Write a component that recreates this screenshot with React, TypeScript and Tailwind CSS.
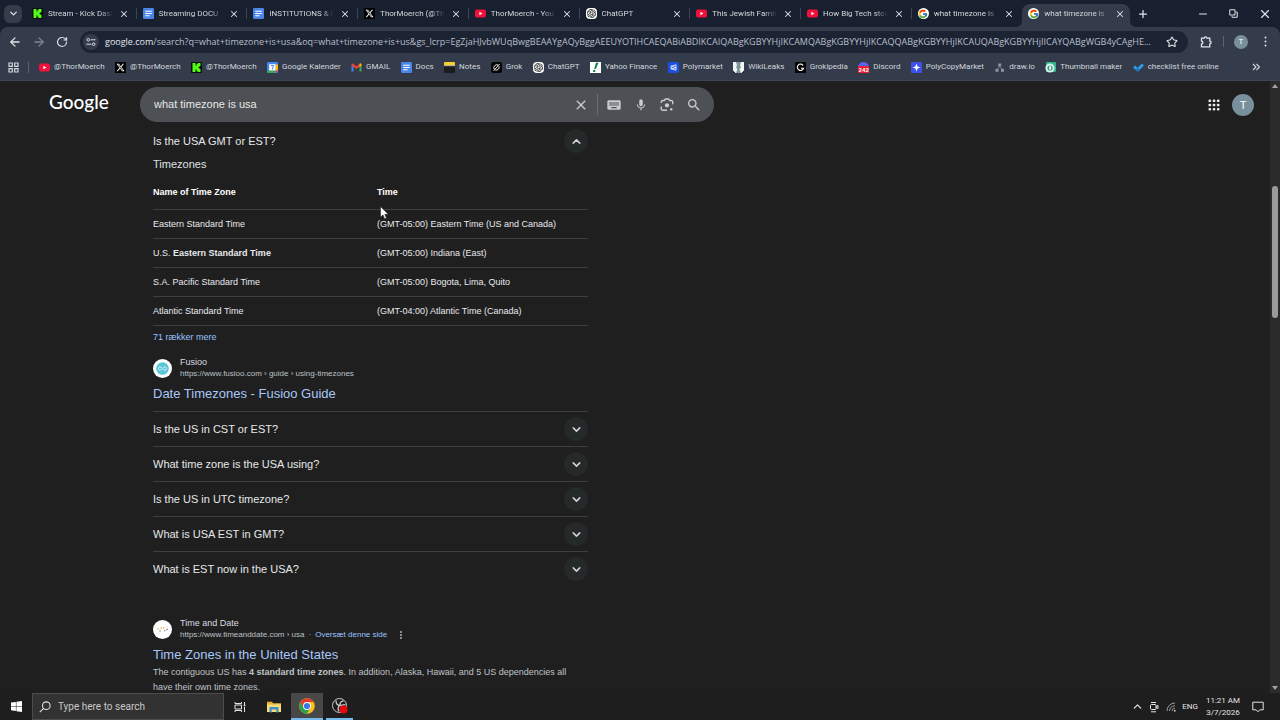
import type { ReactNode } from 'react';
import { FaXTwitter } from 'react-icons/fa6';
import { FcGoogle } from 'react-icons/fc';
import { MdClose, MdKeyboard, MdMic, MdSearch } from 'react-icons/md';
import { SiOpenai } from 'react-icons/si';
import { ArrowLeft, ArrowRight, ChevronDown, ChevronUp, Copy, Minus, Plus, RotateCw, Star, X } from 'lucide-react';

/* ---------- favicons ---------- */

function KickIcon() {
  return (
    <svg viewBox="0 0 11 11" className="size-[11px] shrink-0">
      <rect width="11" height="11" rx="1" fill="#0b0e0f" />
      <path d="M1.5 1h3v2.5h1V2h1V1h3v3h-1v1h-1v1h1v1h1v3h-3V9h-1V7.5h-1V10h-3z" fill="#53fc18" />
    </svg>
  );
}

function DocsIcon() {
  return (
    <svg viewBox="0 0 11 11" className="size-[11px] shrink-0">
      <rect width="11" height="11" rx="1.2" fill="#4a86e8" />
      <path d="M2.2 3.2h6.6M2.2 5.5h6.6M2.2 7.8h4.4" stroke="#fff" strokeWidth="1.1" />
    </svg>
  );
}

function XIcon() {
  return (
    <span className="flex size-[11px] shrink-0 items-center justify-center bg-black text-white">
      <FaXTwitter size={9} />
    </span>
  );
}

function YouTubeIcon() {
  return (
    <svg viewBox="0 0 11 11" className="size-[11px] shrink-0">
      <rect y="1.5" width="11" height="8" rx="2" fill="#f0103a" />
      <path d="M4.4 3.8v3.4l3-1.7z" fill="#fff" />
    </svg>
  );
}

function ChatGptIcon() {
  return (
    <span className="flex size-[11px] shrink-0 items-center justify-center rounded-sm bg-white text-black">
      <SiOpenai size={9} />
    </span>
  );
}

function GoogleIcon() {
  return (
    <span className="flex size-[11px] shrink-0 items-center justify-center rounded-full bg-white">
      <FcGoogle size={10} />
    </span>
  );
}

function CalendarIcon() {
  return (
    <svg viewBox="0 0 11 11" className="size-[11px] shrink-0">
      <rect width="11" height="11" rx="1.2" fill="#4285f4" />
      <path d="M8.5 2.5H11v6H8.5z" fill="#fbbc04" />
      <path d="M0 8.5h8.5V11H1.2A1.2 1.2 0 0 1 0 9.8z" fill="#34a853" />
      <path d="M8.5 8.5H11L8.5 11z" fill="#ea4335" />
      <rect x="2.2" y="2.2" width="6.3" height="6.3" fill="#fff" />
      <path d="M4 3.5h2.6L5.2 7.4" fill="none" stroke="#4285f4" strokeWidth="1" />
    </svg>
  );
}

function GmailIcon() {
  return (
    <svg viewBox="0 0 11 11" className="size-[11px] shrink-0">
      <path d="M.5 3v6.5h2V4.6z" fill="#4285f4" />
      <path d="M10.5 3v6.5h-2V4.6z" fill="#34a853" />
      <path d="M.5 2.8c0-1.2 1.2-1.5 2-.9l3 2.3 3-2.3c.8-.6 2-.3 2 .9v.6l-5 3.7-5-3.7z" fill="#ea4335" />
      <path d="M8.5 1.9c.8-.6 2-.3 2 .9v.6l-2 1.5z" fill="#fbbc04" />
    </svg>
  );
}

function NotesIcon() {
  return (
    <svg viewBox="0 0 11 11" className="size-[11px] shrink-0">
      <rect width="11" height="11" rx="1" fill="#1c1c1a" />
      <path d="M0 1a1 1 0 0 1 1-1h9a1 1 0 0 1 1 1v2.2H0z" fill="#f7d02c" />
      <path d="M0 3.7h11" stroke="#fff" strokeWidth=".7" />
    </svg>
  );
}

function GrokIcon() {
  return (
    <svg viewBox="0 0 11 11" className="size-[11px] shrink-0">
      <rect width="11" height="11" rx="2.5" fill="#050505" />
      <path d="M7 3a3 3 0 0 0-3.8 4.2M4.2 8A3 3 0 0 0 8 4.2M2.6 8.8 8.6 2" fill="none" stroke="#fff" strokeWidth=".9" />
    </svg>
  );
}

function YahooFinanceIcon() {
  return (
    <svg viewBox="0 0 11 11" className="size-[11px] shrink-0">
      <rect width="11" height="11" fill="#fff" />
      <path d="M6 .8h2.6L5.8 7H4.2z" fill="#12804a" />
      <circle cx="4.2" cy="8.9" r="1.2" fill="#12804a" />
    </svg>
  );
}

function PolymarketIcon() {
  return (
    <svg viewBox="0 0 11 11" className="size-[11px] shrink-0">
      <rect width="11" height="11" rx="1.5" fill="#1d4fe0" />
      <path d="M8 2.8v5.4L3 6.8V4.2zM3 4.2l5 1.5-5 1.1" fill="none" stroke="#fff" strokeWidth=".8" />
    </svg>
  );
}

function WikiLeaksIcon() {
  return (
    <svg viewBox="0 0 11 11" className="size-[11px] shrink-0">
      <rect width="11" height="11" fill="#f3f5f5" />
      <path d="M3 0h5L7 3.5 8 5 6.5 7.5 8 11H3l1.4-3.6L3 5l1-1.5z" fill="#7c9598" />
      <path d="M0 8.5 2.5 11H0zM11 8.5 8.5 11H11z" fill="#222" />
    </svg>
  );
}

function GrokipediaIcon() {
  return (
    <svg viewBox="0 0 11 11" className="size-[11px] shrink-0">
      <rect width="11" height="11" fill="#060606" />
      <path d="M8.2 3.5A3.2 3.2 0 1 0 8.6 6.2H6" fill="none" stroke="#fff" strokeWidth="1.1" />
    </svg>
  );
}

function DiscordIcon() {
  return (
    <span className="flex size-[11px] shrink-0 flex-col justify-end rounded-t-full bg-[#5865f2]">
      <span className="bg-[#ed1c2e] text-center text-[6px] leading-[7px] font-bold text-white">242</span>
    </span>
  );
}

function PolyCopyIcon() {
  return (
    <svg viewBox="0 0 11 11" className="size-[11px] shrink-0">
      <rect width="11" height="11" rx="1" fill="#3c50ea" />
      <path d="M5.5 1.5 6.6 4.4 9.5 5.5 6.6 6.6 5.5 9.5 4.4 6.6 1.5 5.5l2.9-1.1z" fill="#fff" />
    </svg>
  );
}

function DrawIoIcon() {
  return (
    <svg viewBox="0 0 11 11" className="size-[11px] shrink-0" fill="#8c929c">
      <rect x="4.2" y="1.5" width="3" height="3" />
      <rect x="1.5" y="6.8" width="3" height="3" />
      <rect x="7" y="6.8" width="3" height="3" />
      <path d="M5.7 4 3 8M5.7 4l2.8 4" stroke="#8c929c" strokeWidth=".7" />
    </svg>
  );
}

function ThumbnailIcon() {
  return (
    <svg viewBox="0 0 11 11" className="size-[11px] shrink-0">
      <rect x="1" width="10" height="10" rx="1" fill="#35b38d" />
      <circle cx="5" cy="6" r="4.6" fill="#d7f5ea" />
      <circle cx="5" cy="6" r="2.6" fill="#2a9c7a" />
      <path d="M4.2 4.3h1.9v3.4H4.2z" fill="#fff" />
    </svg>
  );
}

function ChecklistIcon() {
  return (
    <svg viewBox="0 0 11 11" className="size-[11px] shrink-0">
      <path d="M0 5.6 2.2 3.4 4.6 5.8 8.8 1.4 11 3.4 4.8 9.8z" fill="#2f9be6" />
      <path d="M2.8 7.8 4.6 5.8 6.6 7.8 4.8 9.8z" fill="#1c74bd" />
    </svg>
  );
}

/* ---------- data ---------- */

const tabs: { title: string; icon: ReactNode; active?: boolean }[] = [
  { title: 'Stream - Kick Dash', icon: <KickIcon /> },
  { title: 'Streaming DOCU', icon: <DocsIcon /> },
  { title: 'INSTITUTIONS & C', icon: <DocsIcon /> },
  { title: 'ThorMoerch (@Th', icon: <XIcon /> },
  { title: 'ThorMoerch - You', icon: <YouTubeIcon /> },
  { title: 'ChatGPT', icon: <ChatGptIcon /> },
  { title: 'This Jewish Family', icon: <YouTubeIcon /> },
  { title: 'How Big Tech stole', icon: <YouTubeIcon /> },
  { title: 'what timezone is', icon: <GoogleIcon /> },
  { title: 'what timezone is', icon: <GoogleIcon />, active: true },
];

const bookmarks: { label: string; icon: ReactNode }[] = [
  { label: '@ThorMoerch', icon: <YouTubeIcon /> },
  { label: '@ThorMoerch', icon: <XIcon /> },
  { label: '@ThorMoerch', icon: <KickIcon /> },
  { label: 'Google Kalender', icon: <CalendarIcon /> },
  { label: 'GMAIL', icon: <GmailIcon /> },
  { label: 'Docs', icon: <DocsIcon /> },
  { label: 'Notes', icon: <NotesIcon /> },
  { label: 'Grok', icon: <GrokIcon /> },
  { label: 'ChatGPT', icon: <ChatGptIcon /> },
  { label: 'Yahoo Finance', icon: <YahooFinanceIcon /> },
  { label: 'Polymarket', icon: <PolymarketIcon /> },
  { label: 'WikiLeaks', icon: <WikiLeaksIcon /> },
  { label: 'Grokipedia', icon: <GrokipediaIcon /> },
  { label: 'Discord', icon: <DiscordIcon /> },
  { label: 'PolyCopyMarket', icon: <PolyCopyIcon /> },
  { label: 'draw.io', icon: <DrawIoIcon /> },
  { label: 'Thumbnail maker', icon: <ThumbnailIcon /> },
  { label: 'checklist free online', icon: <ChecklistIcon /> },
];

const zones: { name: ReactNode; time: string }[] = [
  { name: 'Eastern Standard Time', time: '(GMT-05:00) Eastern Time (US and Canada)' },
  { name: <>U.S. <b>Eastern Standard Time</b></>, time: '(GMT-05:00) Indiana (East)' },
  { name: 'S.A. Pacific Standard Time', time: '(GMT-05:00) Bogota, Lima, Quito' },
  { name: 'Atlantic Standard Time', time: '(GMT-04:00) Atlantic Time (Canada)' },
];

const questions = [
  'Is the US in CST or EST?',
  'What time zone is the USA using?',
  'Is the US in UTC timezone?',
  'What is USA EST in GMT?',
  'What is EST now in the USA?',
];

const urlQuery =
  '/search?q=what+timezone+is+usa&oq=what+timezone+is+us&gs_lcrp=EgZjaHJvbWUqBwgBEAAYgAQyBggAEEUYOTIHCAEQABiABDIKCAIQABgKGBYYHjIKCAMQABgKGBYYHjIKCAQQABgKGBYYHjIKCAUQABgKGBYYHjIICAYQABgWGB4yCAgHEAAYFhgeMgg';

/* ---------- browser chrome ---------- */

function TabStrip() {
  return (
    <div className="flex h-[27px] items-center pl-1">
      <button aria-label="Search tabs" className="flex size-[18px] items-center justify-center rounded-md bg-[#353c4a]">
        <ChevronDown size={11} strokeWidth={3} />
      </button>
      <div className="ml-1 flex h-full min-w-0 flex-1 items-end">
        {tabs.map((tab, i) => (
          <div key={i} className="flex h-[23px] min-w-0 flex-1">
            <div
              className={
                tab.active
                  ? 'relative flex min-w-0 flex-1 items-center rounded-t-lg bg-[#343b4a] pr-[5px] pb-1 pl-1.5'
                  : 'flex min-w-0 flex-1 items-center pr-[5px] pb-1 pl-1.5'
              }
            >
              {tab.active && (
                <svg viewBox="0 0 6 6" className="absolute bottom-0 -left-1.5 size-1.5" fill="#343b4a">
                  <path d="M6 0v6H0a6 6 0 0 0 6-6z" />
                </svg>
              )}
              {tab.active && (
                <svg viewBox="0 0 6 6" className="absolute -right-1.5 bottom-0 size-1.5" fill="#343b4a">
                  <path d="M0 0v6h6a6 6 0 0 1-6-6z" />
                </svg>
              )}
              {tab.icon}
              <span className="mr-1.5 ml-[5px] min-w-0 flex-1 overflow-hidden mask-r-from-80% text-[8px] whitespace-nowrap text-[#d3d7de]">
                {tab.title}
              </span>
              <button aria-label="Close tab" className="shrink-0">
                <X size={10} strokeWidth={2.5} />
              </button>
            </div>
            <span className={i < 8 ? 'mt-1 ml-0.5 h-[11px] w-px bg-[#3b4456]' : 'ml-0.5 w-px'} />
          </div>
        ))}
      </div>
      <button aria-label="New tab" className="ml-1">
        <Plus size={12} strokeWidth={2.5} />
      </button>
      <div className="ml-12 flex w-[83px] shrink-0 items-center justify-between pr-2">
        <button aria-label="Minimize"><Minus size={12} /></button>
        <button aria-label="Restore"><Copy size={9} strokeWidth={2.8} className="-scale-x-100 rotate-90" /></button>
        <button aria-label="Close"><X size={14} strokeWidth={2} /></button>
      </div>
    </div>
  );
}

function Toolbar() {
  return (
    <div className="flex h-[29px] items-center rounded-t-lg bg-[#343b4a] pr-2.5 pl-2">
      <button aria-label="Back"><ArrowLeft size={14} strokeWidth={2.2} /></button>
      <button aria-label="Forward" className="ml-2.5 text-[#7d8492]"><ArrowRight size={14} strokeWidth={2.2} /></button>
      <button aria-label="Reload" className="ml-2.5"><RotateCw size={12} strokeWidth={2.4} /></button>
      <div className="ml-3 flex h-[22px] min-w-0 flex-1 items-center rounded-full bg-[#1c2434] pr-2.5 pl-[3px]">
        <button aria-label="Site information" className="flex size-4 shrink-0 items-center justify-center rounded-full bg-[#343b4a]">
          <svg viewBox="0 0 10 10" className="size-[10px]" fill="none" stroke="#d8dce3" strokeWidth="1">
            <circle cx="2.3" cy="2.8" r="1.3" />
            <path d="M4.6 2.8h5M.4 7.2h5" />
            <circle cx="7.7" cy="7.2" r="1.3" />
          </svg>
        </button>
        <span className="mr-2.5 ml-1.5 min-w-0 flex-1 truncate font-['Open_Sans',sans-serif] text-[9px] text-[#b9bfca]">
          <span className="text-[#e6e9ee]">google.com</span>
          {urlQuery}
        </span>
        <button aria-label="Bookmark this page"><Star size={12} strokeWidth={2.2} /></button>
      </div>
      <button aria-label="Extensions" className="ml-3">
        <svg viewBox="0 0 12 12" className="size-3" fill="none" stroke="currentColor" strokeWidth="1.3">
          <path d="M1.5 2.2h2.7a1.3 1.3 0 0 1 2.6 0h3v3a1.3 1.3 0 0 1 0 2.6v3H1.5V8a1.4 1.4 0 0 0 0-2.8z" />
        </svg>
      </button>
      <span className="ml-[11px] h-[11px] w-px bg-[#596172]" />
      <button className="ml-2.5 size-[14px] rounded-full bg-[#78909c] text-[8px] leading-[14px] text-white">T</button>
      <button aria-label="Menu" className="ml-3 flex w-2.5 justify-center">
        <svg viewBox="0 0 3 11" className="h-[11px] w-[3px]" fill="currentColor">
          <circle cx="1.5" cy="1.5" r="1" /><circle cx="1.5" cy="5.5" r="1" /><circle cx="1.5" cy="9.5" r="1" />
        </svg>
      </button>
    </div>
  );
}

function BookmarksBar() {
  return (
    <div className="flex h-[25px] items-center border-b border-[#3e4554] bg-[#343b4a] pr-5 pb-0.5 pl-2 text-[8px] text-[#d2d6dd]">
      <svg viewBox="0 0 11 11" className="size-[11px]" fill="none" stroke="currentColor" strokeWidth="1.2">
        <path d="M1 1h3.3v3.3H1zM6.7 1H10v3.3H6.7zM1 6.7h3.3V10H1zM6.7 6.7H10V10H6.7z" />
      </svg>
      <span className="mr-2.5 ml-[9px] h-[11px] w-px bg-[#596172]" />
      <nav className="mr-[33px] flex min-w-0 flex-1 justify-between">
        {bookmarks.map((b, i) => (
          <a key={i} href="#" className="flex items-center gap-1 whitespace-nowrap">
            {b.icon}
            {b.label}
          </a>
        ))}
      </nav>
      <button aria-label="More bookmarks">
        <svg viewBox="0 0 8 8" className="size-2" fill="none" stroke="currentColor" strokeWidth="1.1">
          <path d="m1 1 3 3-3 3M4.5 1l3 3-3 3" />
        </svg>
      </button>
    </div>
  );
}

/* ---------- search page ---------- */

function SearchHeader() {
  return (
    <header className="flex items-center pt-1.5 pr-4 pl-[49px]">
      <a href="#" className="w-[91px] pb-1.5 font-[Lato,sans-serif] text-[19px] leading-6 font-medium text-white">Google</a>
      <form className="flex h-[35px] w-[574px] items-center rounded-full bg-[#4d5055] pr-3 pl-3.5 text-[#c9ccd0]">
        <input
          aria-label="Search"
          defaultValue="what timezone is usa"
          className="min-w-0 flex-1 text-[11px] text-[#e8e8e8] outline-none"
        />
        <button type="button" aria-label="Clear"><MdClose size={16} /></button>
        <span className="mx-2 h-[21px] w-px bg-[#6b6f75]" />
        <button type="button" aria-label="Keyboard"><MdKeyboard size={16} /></button>
        <button type="button" aria-label="Voice search" className="ml-3"><MdMic size={14} /></button>
        <button type="button" aria-label="Search by image" className="ml-3">
          <svg viewBox="0 0 14 14" className="size-[14px]" fill="none" stroke="currentColor" strokeWidth="1.4">
            <path d="M1.2 5V4.2a1.7 1.7 0 0 1 1.7-1.7h1.5L5.3 1h3.4l.9 1.5h1.5a1.7 1.7 0 0 1 1.7 1.7v2M1.2 8.5v2a1.7 1.7 0 0 0 1.7 1.7H7" />
            <circle cx="7" cy="7.3" r="2.1" fill="currentColor" stroke="none" />
            <circle cx="11.3" cy="11.3" r="1.2" fill="currentColor" stroke="none" />
          </svg>
        </button>
        <button type="submit" aria-label="Google search" className="ml-3"><MdSearch size={16} /></button>
      </form>
      <div className="ml-auto flex items-center gap-3">
        <button aria-label="Google apps">
          <svg viewBox="0 0 12 12" className="size-3" fill="#e8eaed">
            {[0.5, 4.7, 8.9].map((y) =>
              [0.5, 4.7, 8.9].map((x) => <rect key={`${x}-${y}`} x={x} y={y} width="2.6" height="2.6" rx=".9" />),
            )}
          </svg>
        </button>
        <button className="size-[22px] rounded-full bg-[#78909c] text-[11px] leading-[22px] text-white">T</button>
      </div>
    </header>
  );
}

function Question({ text, open }: { text: string; open?: boolean }) {
  return (
    <div className="flex items-center justify-between">
      <span className="text-[11px] text-[#e6e8ea]">{text}</span>
      <button aria-label={text} className="flex size-6 items-center justify-center rounded-full bg-[#262929] text-[#d0d2d5]">
        {open ? <ChevronUp size={13} strokeWidth={2.8} /> : <ChevronDown size={13} strokeWidth={2.8} />}
      </button>
    </div>
  );
}

interface SourceProps {
  icon: ReactNode;
  site: string;
  url: ReactNode;
}

function Source({ icon, site, url }: SourceProps) {
  return (
    <div className="flex items-center gap-2">
      {icon}
      <div>
        <div className="text-[9px] leading-3 text-[#dadce0]">{site}</div>
        <div className="flex items-center text-[8px] leading-3 text-[#bdc1c6]">{url}</div>
      </div>
    </div>
  );
}

function Results() {
  return (
    <main className="ml-[153px] w-[435px] pt-[7px]">
      <Question text="Is the USA GMT or EST?" open />
      <div className="mt-[3px] text-[11px] leading-4 text-[#dfe1e4]">Timezones</div>
      <table className="mt-1 w-full text-left text-[9px] leading-3 text-[#e8eaed]">
        <thead>
          <tr className="border-b border-[#3c4043]">
            <th className="w-[224px] pt-2.5 pb-[11px] text-white">Name of Time Zone</th>
            <th className="pt-2.5 pb-[11px] text-white">Time</th>
          </tr>
        </thead>
        <tbody>
          {zones.map((z) => (
            <tr key={z.time} className="border-b border-[#3c4043]">
              <td className="py-2">{z.name}</td>
              <td className="py-2">{z.time}</td>
            </tr>
          ))}
        </tbody>
      </table>
      <a href="#" className="mt-[3px] block text-[9px] leading-4 text-[#99c3ff]">71 rækker mere</a>
      <div className="mt-[11px]">
        <Source
          icon={
            <svg viewBox="0 0 19 19" className="size-[19px]">
              <circle cx="9.5" cy="9.5" r="9.5" fill="#fff" />
              <circle cx="9.5" cy="9.5" r="6.3" fill="#5bc5d9" />
              <path d="M9.5 9.5C8 7.5 5.5 7.5 5.5 9.5S8 11.5 9.5 9.5s4-2 4 0-2.500 2-4 0z" fill="none" stroke="#e4f8fb" strokeWidth="1" />
            </svg>
          }
          site="Fusioo"
          url="https://www.fusioo.com › guide › using-timezones"
        />
      </div>
      <a href="#" className="mt-1 mb-[7px] block text-[13px] leading-5 text-[#a8c7fa]">Date Timezones - Fusioo Guide</a>
      {questions.map((q) => (
        <div key={q} className="border-t border-[#3c4043] py-[5px]">
          <Question text={q} />
        </div>
      ))}
      <div className="mt-[31px]">
        <Source
          icon={
            <svg viewBox="0 0 19 19" className="size-[19px]">
              <circle cx="9.5" cy="9.5" r="9.5" fill="#fff" />
              <circle cx="5" cy="9" r=".8" fill="#f2a33c" />
              <circle cx="7" cy="11" r=".8" fill="#5aa469" />
              <circle cx="8.3" cy="8" r=".8" fill="#e8b23a" />
              <circle cx="10.5" cy="8" r=".8" fill="#e8b23a" />
              <circle cx="11.8" cy="10.8" r=".8" fill="#5aa0d8" />
              <circle cx="14" cy="9.5" r=".8" fill="#d9534f" />
            </svg>
          }
          site="Time and Date"
          url={
            <>
              https://www.timeanddate.com › usa
              <span className="mx-1">·</span>
              <a href="#" className="text-[#99c3ff]">Oversæt denne side</a>
              <button aria-label="About this result" className="ml-[13px]">
                <svg viewBox="0 0 2 8" className="h-2 w-0.5" fill="currentColor">
                  <circle cx="1" cy="1" r=".9" /><circle cx="1" cy="4" r=".9" /><circle cx="1" cy="7" r=".9" />
                </svg>
              </button>
            </>
          }
        />
      </div>
      <a href="#" className="mt-1 block text-[13px] leading-5 text-[#a8c7fa]">Time Zones in the United States</a>
      <p className="text-[9px] leading-[15px] text-[#bfc3c8]">
        The contiguous US has <b>4 standard time zones</b>. In addition, Alaska, Hawaii, and 5 US dependencies all
        have their own time zones.
      </p>
    </main>
  );
}

function Scrollbar() {
  return (
    <div className="flex w-2.5 shrink-0 flex-col items-center bg-[#2b2b2b] py-[3px]">
      <svg viewBox="0 0 6 4" className="h-1 w-1.5" fill="#a3a3a3"><path d="M3 0l3 4H0z" /></svg>
      <span className="mt-[98px] h-[132px] w-1.5 rounded-full bg-[#9b9b9b]" />
      <svg viewBox="0 0 6 4" className="mt-auto h-1 w-1.5" fill="#a3a3a3"><path d="M3 4l3-4H0z" /></svg>
    </div>
  );
}

/* ---------- taskbar ---------- */

function Taskbar() {
  return (
    <footer className="flex h-[27px] shrink-0 items-center bg-[#1e1e1e] font-[Roboto,sans-serif] text-[#e4e4e4]">
      <button aria-label="Start" className="flex w-8 justify-center">
        <svg viewBox="0 0 11 11" className="size-[11px]" fill="#fff">
          <path d="M0 1.6 4.9.9v4.3H0zM5.4.8 11 0v5.2H5.4zM0 5.7h4.9V10L0 9.3zM5.4 5.7H11V11l-5.6-.8z" />
        </svg>
      </button>
      <label className="flex h-full w-[192px] items-center border border-[#4c4c4c] bg-[#323232] pl-1.5">
        <svg viewBox="0 0 12 12" className="size-3" fill="none" stroke="currentColor" strokeWidth="1.1">
          <circle cx="7.3" cy="4.7" r="3.8" />
          <path d="M4.6 7.4.8 11.2" />
        </svg>
        <input
          aria-label="Type here to search"
          placeholder="Type here to search"
          className="ml-[7px] min-w-0 flex-1 text-[10px] outline-none placeholder:text-[#c8c8c8]"
        />
      </label>
      <button aria-label="Task view" className="flex w-8 justify-center">
        <svg viewBox="0 0 12 12" className="size-3" fill="none" stroke="currentColor" strokeWidth="1">
          <path d="M1 1v1.5h6.5V1M1 11V9.5h6.5V11M1 4h6.5v4H1zM10.5 1v3M10.5 6v5" />
          <path d="M9.7 4.5h1.6" strokeWidth="1.6" />
        </svg>
      </button>
      <button aria-label="File Explorer" className="flex w-[35px] justify-center">
        <svg viewBox="0 0 14 12" className="h-3 w-3.5">
          <path d="M0 .8h5l1 1.4h8V11H0z" fill="#e9b43a" />
          <path d="M0 3.5h14V11H0z" fill="#fbdc76" />
          <path d="M2.5 6h9v5.5H9.3V8.5H4.7v3H2.5z" fill="#3f8fcb" />
        </svg>
      </button>
      <button aria-label="Google Chrome" className="flex h-full w-8 items-center justify-center border-b-2 border-[#76b9ed] bg-[#484848]">
        <svg viewBox="0 0 16 16" className="size-4">
          <circle cx="8" cy="8" r="7.8" fill="#fbc116" />
          <path d="M1.25 4.1A7.8 7.8 0 0 1 14.75 4.1H8L4.5 10z" fill="#e33b2e" />
          <path d="M1.25 4.1A7.8 7.8 0 0 0 7.8 15.8L11.4 9.9 8 11.5 4.6 9.9z" fill="#2ba24c" />
          <circle cx="8" cy="8" r="3.9" fill="#fff" />
          <circle cx="8" cy="8" r="3.1" fill="#3b78e7" />
        </svg>
      </button>
      <button aria-label="OBS Studio" className="ml-[3px] flex h-full w-[27px] items-center justify-center border-b-2 border-[#76b9ed]">
        <svg viewBox="0 0 16 16" className="size-4">
          <circle cx="7.5" cy="7.5" r="7" fill="#1b1b1b" stroke="#c9c9c9" strokeWidth="1" />
          <path d="M4 2.5C4 6 6 7.5 8 7.5s3.5-1.5 5.5-.5M8 7.5C6 8.5 5.5 11 7 13.5M8 7.5C7.5 5 9 3 11.5 3" fill="none" stroke="#c9c9c9" strokeWidth="1.3" />
          <circle cx="11.5" cy="11.5" r="4" fill="#e8060f" />
        </svg>
      </button>
      <div className="ml-auto flex items-center pr-4">
        <ChevronUp size={13} strokeWidth={2.2} />
        <svg viewBox="0 0 10 12" className="ml-[5px] h-3 w-2.5" fill="none" stroke="currentColor" strokeWidth="1">
          <rect x="1.5" y="3.5" width="5.5" height="5" rx="1" />
          <path d="M7 5.5 9 4.5v3L7 6.5M2 1.5h5M2 10.8h5" />
        </svg>
        <svg viewBox="0 0 10 10" className="ml-[7px] size-2.5" fill="none" stroke="#9a9a9a" strokeWidth="1">
          <path d="M1 9A8 8 0 0 1 9 1M3.5 9A5.5 5.5 0 0 1 9 3.7M6 9a3 3 0 0 1 3-2.8" />
          <path d="M8 8h1.5v1.5H8z" fill="#e4e4e4" stroke="none" />
        </svg>
        <span className="ml-1.5 text-[8px]">ENG</span>
        <div className="ml-[7px] w-9 text-center text-[8px] leading-3 whitespace-nowrap">
          <div>11:21 AM</div>
          <div>3/7/2026</div>
        </div>
        <svg viewBox="0 0 12 12" className="ml-[11px] size-3" fill="none" stroke="currentColor" strokeWidth="1">
          <path d="M.8 1.2h10.4v7.6H7.8L6 10.8 4.2 8.8H.8z" />
        </svg>
      </div>
    </footer>
  );
}

export default function App() {
  return (
    <div className="relative flex h-screen flex-col overflow-hidden bg-[#1f1f1f]">
      <div className="shrink-0 bg-[#18202f] font-[Roboto,sans-serif] text-[#dfe2e8]">
        <TabStrip />
        <Toolbar />
        <BookmarksBar />
      </div>
      <div className="flex min-h-0 flex-1 font-['Liberation_Sans',sans-serif]">
        <div className="min-w-0 flex-1 overflow-hidden">
          <SearchHeader />
          <Results />
        </div>
        <Scrollbar />
      </div>
      <Taskbar />
      {/* mouse pointer */}
      <svg viewBox="0 0 9 14" className="pointer-events-none absolute top-[206px] left-[380px] h-[14px] w-[9px]">
        <path d="M.5.5v10.6L3 8.9l1.7 4 1.8-.8-1.7-3.8H8.3z" fill="#fff" stroke="#222" strokeWidth=".6" />
      </svg>
    </div>
  );
}
